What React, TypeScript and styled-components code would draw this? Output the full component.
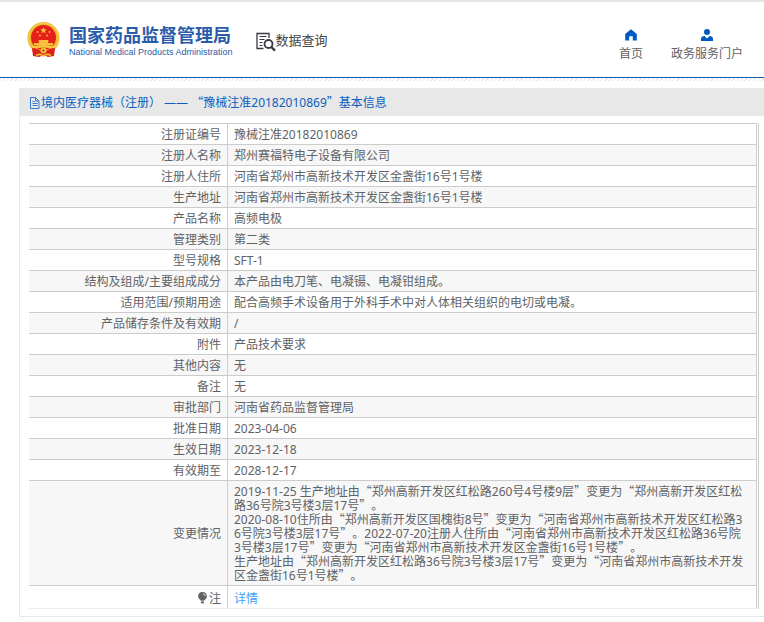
import React from "react";
import styled, { createGlobalStyle } from "styled-components";

const GlobalStyle = createGlobalStyle`
  * { box-sizing: border-box; }
  body {
    margin: 0;
    background: #fff;
    color: #606266;
    font: 12px/14px "Noto Sans", "Noto Sans CJK SC", sans-serif;
    text-spacing-trim: space-all;
  }
`;

const TopStrip = styled.div`
  height: 2px;
  background: #e5e5e5;
`;

const Header = styled.header`
  display: flex;
  align-items: center;
  height: 76px;
  padding: 0 21px 0 27px;
  border-bottom: 1px solid #0f5fae;
`;

const HatchRule = styled.div`
  height: 3px;
  margin-bottom: 7px;
  background: repeating-linear-gradient(135deg, #e8e8e8 0 1px, #fff 1px 3px);
`;

const Brand = styled.a`
  display: flex;
  align-items: center;
  gap: 9px;
  color: #2b5caa;
  text-decoration: none;
`;

const BrandText = styled.span`
  display: flex;
  flex-direction: column;
  padding-top: 4px;
`;

const BrandName = styled.span`
  font: bold 18px/20px "Noto Sans CJK SC", sans-serif;
  white-space: nowrap;
`;

const BrandSub = styled.span`
  font: 9px/16px "Liberation Sans", Arial, sans-serif;
  white-space: nowrap;
`;

const Section = styled.a`
  display: flex;
  align-items: center;
  margin-left: 22px;
  color: #444;
  font: 13px/20px "Noto Sans CJK SC", sans-serif;
  text-decoration: none;
  white-space: nowrap;

  svg { margin-top: 4px; }
`;

const Nav = styled.nav`
  display: flex;
  gap: 28px;
  margin-left: auto;
  padding-top: 10px;
`;

const NavLink = styled.a`
  display: flex;
  flex-direction: column;
  align-items: center;
  gap: 6px;
  color: #606266;
  text-decoration: none;
  white-space: nowrap;

  svg { color: #005bc0; }
`;

const Panel = styled.main`
  margin-left: 19px;
  border: solid #e8e8e8;
  border-width: 0 0 1px 1px;
`;

const PanelTitle = styled.h1`
  display: flex;
  align-items: center;
  height: 28px;
  margin: 0;
  padding: 2px 0 0 9px;
  background: #e8e8e8;
  color: #0a5fc0;
  font-size: 12px;
  font-weight: 400;
  white-space: pre;
`;

const PanelBody = styled.div`
  padding: 7px 5px 7px 9px;
`;

const TableFrame = styled.div`
  padding-right: 1px;
  border-right: 1px solid #ccc;
`;

const Table = styled.table`
  width: 100%;
  border-collapse: separate;
  border-spacing: 0;
  border-right: 1px solid #ccc;
  border-bottom: 1px solid #ebeef5;
`;

const Row = styled.tr<{ $tall?: boolean }>`
  &:nth-child(even) { background: #f7f7f7; }

  > * {
    padding: ${(p) => (p.$tall ? "6px 6px 2px" : "4px 6px 2px")};
    border-top: 1px solid #ccc;
  }

  > td { padding-right: 10px; }
`;

const Label = styled.th`
  width: 199px;
  border-right: 1px solid #ccc;
  font-weight: 400;
  text-align: right;

  svg { vertical-align: -1px; }
`;

const Value = styled.td`
  word-break: break-all;
`;

const WideMark = styled.span`
  font-family: "Noto Sans CJK SC", sans-serif;
  line-height: 0;
`;

const DetailLink = styled.a`
  color: #409eff;
  text-decoration: none;
`;

/* Chinese quotation marks take a full character cell. */
function Zh({ children }: { children: string }) {
  return (
    <>
      {children.split(/([“”])/).map((part, i) =>
        i % 2 ? <WideMark key={i}>{part}</WideMark> : part
      )}
    </>
  );
}

const Emblem = () => (
  <svg width="33" height="36" viewBox="0 0 33 36" aria-hidden="true">
    <path d="M5 25h23l-1 9-6 1-4.500-2-4.500 2-6-1z" fill="#d8201c" />
    <circle cx="16.500" cy="16" r="16" fill="#edb52c" />
    <circle cx="16.500" cy="16" r="14.800" fill="none" stroke="#f8d45a" strokeWidth="1" />
    <circle cx="16.500" cy="15.500" r="12.500" fill="#e5201b" />
    <path d="M16.500 5l.9 2.300 2.500.1-2 1.500.7 2.400-2.100-1.400-2.100 1.400.7-2.400-2-1.500 2.500-.1z" fill="#f8c03c" />
    <g fill="#f8c03c">
      <circle cx="10.500" cy="10" r=".9" />
      <circle cx="22.500" cy="10" r=".9" />
      <circle cx="13" cy="13.500" r=".9" />
      <circle cx="20" cy="13.500" r=".9" />
      <path d="M12 18h9l1 1.500h-1V21h5v2H7v-2h5v-1.500h-1z" />
    </g>
    <path d="M4 24q12.500-2 25 0l-3 3q-9.500-3-19 0z" fill="#f4c63c" />
    <path d="M5 26q6 0 11.500 5Q22 26 28 26l-1 5-10.500 2L6 31z" fill="#dc211c" />
    <circle cx="16.500" cy="28.500" r="3" fill="#f2bf35" />
    <circle cx="16.500" cy="28.500" r="1" fill="#dc211c" />
    <path d="M9 33.500q4-2.500 7.500.5 3.500-3 7.500-.5" fill="none" stroke="#f1bd34" strokeWidth="1.500" />
  </svg>
);

const SearchDoc = () => (
  <svg width="21" height="20" viewBox="0 0 21 20" fill="none" stroke="#3b3947" aria-hidden="true">
    <path d="M14 6V1.500H2v15h6.500" strokeWidth="1.300" />
    <path d="M4.500 4.500h7M4.500 7.500h5M4.500 10.500h3M4.500 13.500h3" />
    <circle cx="13.500" cy="12" r="4" strokeWidth="1.800" />
    <path d="M16.300 15l3.700 3.700" strokeWidth="2.400" />
  </svg>
);

const Home = () => (
  <svg width="12" height="12" viewBox="0 0 12 12" fill="currentColor" aria-hidden="true">
    <path d="M6 .3L.2 5v6.500h4V7.300h3.600v4.200h4V5z" />
  </svg>
);

const Person = () => (
  <svg width="12" height="12" viewBox="0 0 12 12" fill="currentColor" aria-hidden="true">
    <circle cx="6" cy="3" r="3" />
    <path d="M0 12V9.700Q0 7.500 3.500 7L6 9.500 8.500 7Q12 7.500 12 9.700V12z" />
  </svg>
);

const DocIcon = () => (
  <svg width="12" height="12" viewBox="0 0 12 12" fill="none" stroke="currentColor" aria-hidden="true">
    <path d="M1.500 .5h5l3.500 3.500v7.500h-8.500zM6.500 .5v3.500h3.500M3.500 6.500h5M3.500 8.500h5M3.500 4.500h2" strokeWidth=".8" />
  </svg>
);

const Bulb = () => (
  <svg width="12" height="12" viewBox="0 0 12 12" aria-hidden="true">
    <path d="M5.500 0a4.200 4.200 0 0 0-2.300 7.800l.8 1h3l.8-1A4.200 4.200 0 0 0 5.500 0z" fill="#606266" />
    <path d="M4 9.500h3v1L6.300 11.500H4.700L4 10.500z" fill="#606266" />
    <path d="M6 1.600q2 .3 2.200 2.400" fill="none" stroke="#fff" strokeWidth=".8" />
  </svg>
);

const rows: [string, string][] = [
  ["注册证编号", "豫械注准20182010869"],
  ["注册人名称", "郑州赛福特电子设备有限公司"],
  ["注册人住所", "河南省郑州市高新技术开发区金盏街16号1号楼"],
  ["生产地址", "河南省郑州市高新技术开发区金盏街16号1号楼"],
  ["产品名称", "高频电极"],
  ["管理类别", "第二类"],
  ["型号规格", "SFT-1"],
  ["结构及组成/主要组成成分", "本产品由电刀笔、电凝镊、电凝钳组成。"],
  ["适用范围/预期用途", "配合高频手术设备用于外科手术中对人体相关组织的电切或电凝。"],
  ["产品储存条件及有效期", "/"],
  ["附件", "产品技术要求"],
  ["其他内容", "无"],
  ["备注", "无"],
  ["审批部门", "河南省药品监督管理局"],
  ["批准日期", "2023-04-06"],
  ["生效日期", "2023-12-18"],
  ["有效期至", "2028-12-17"],
];

const changes = [
  "2019-11-25 生产地址由“郑州高新开发区红松路260号4号楼9层”变更为“郑州高新开发区红松路36号院3号楼3层17号”。",
  "2020-08-10住所由“郑州高新开发区国槐街8号”变更为“河南省郑州市高新技术开发区红松路36号院3号楼3层17号”。2022-07-20注册人住所由“河南省郑州市高新技术开发区红松路36号院3号楼3层17号”变更为“河南省郑州市高新技术开发区金盏街16号1号楼”。",
  "生产地址由“郑州高新开发区红松路36号院3号楼3层17号”变更为“河南省郑州市高新技术开发区金盏街16号1号楼”。",
];

export default function App() {
  return (
    <div lang="zh-CN">
      <GlobalStyle />
      <TopStrip />
      <Header>
        <Brand href="#">
          <Emblem />
          <BrandText>
            <BrandName>国家药品监督管理局</BrandName>
            <BrandSub>National Medical Products Administration</BrandSub>
          </BrandText>
        </Brand>
        <Section href="#">
          <SearchDoc />
          数据查询
        </Section>
        <Nav>
          <NavLink href="#"><Home />首页</NavLink>
          <NavLink href="#"><Person />政务服务门户</NavLink>
        </Nav>
      </Header>
      <HatchRule />
      <Panel>
        <PanelTitle>
          <DocIcon />
          <span><Zh>境内医疗器械（注册） —— “豫械注准20182010869”基本信息</Zh></span>
        </PanelTitle>
        <PanelBody>
          <TableFrame>
            <Table>
              <tbody>
                {rows.map(([label, value]) => (
                  <Row key={label}>
                    <Label scope="row">{label}</Label>
                    <Value>{value}</Value>
                  </Row>
                ))}
                <Row>
                  <Label scope="row">变更情况</Label>
                  <Value>
                    {changes.map((text) => (
                      <div key={text}><Zh>{text}</Zh></div>
                    ))}
                  </Value>
                </Row>
                <Row $tall>
                  <Label scope="row"><Bulb />注</Label>
                  <Value><DetailLink href="#">详情</DetailLink></Value>
                </Row>
              </tbody>
            </Table>
          </TableFrame>
        </PanelBody>
      </Panel>
    </div>
  );
}
